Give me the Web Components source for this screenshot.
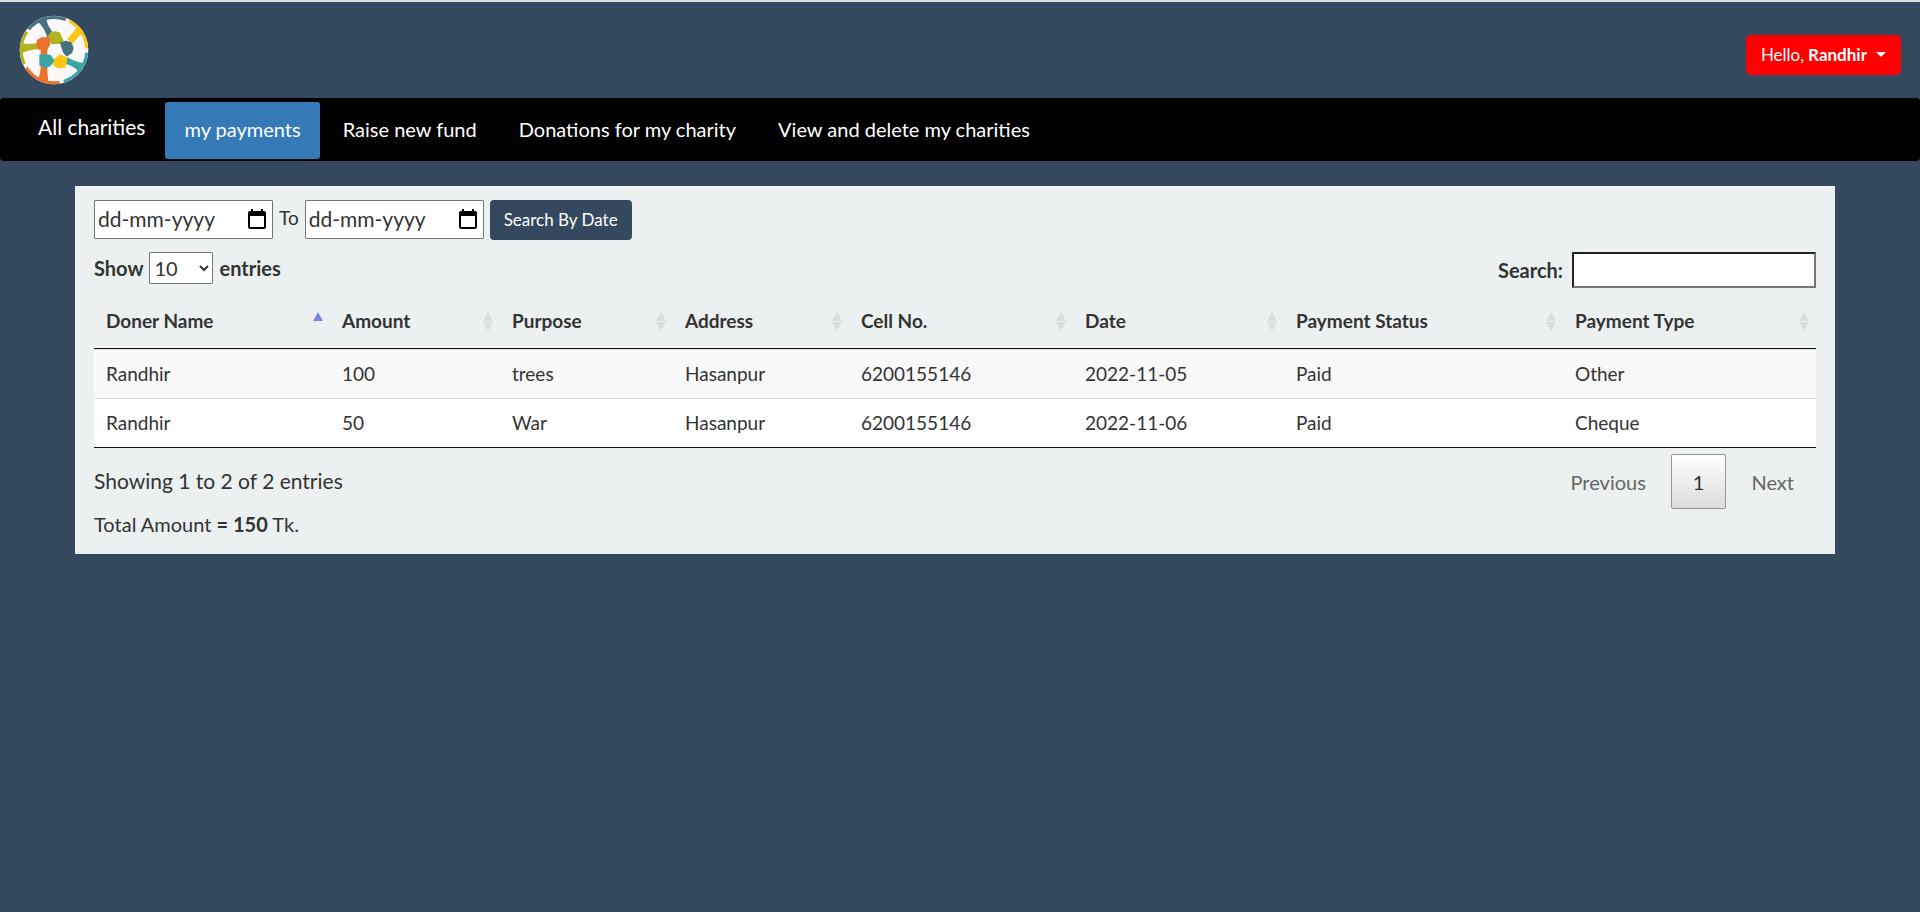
<!DOCTYPE html>
<html lang="en">
<head>
<meta charset="utf-8">
<title>My payments</title>
<style>
  html { background: #34495e; }
  body {
    margin: 0;
    border-top: 2px solid #d5dee1;
    font-family: Lato, "Open Sans", sans-serif;
    font-size: 20px;
    line-height: 28px;
    color: #333;
  }
</style>
</head>
<body>
<site-header></site-header>
<site-nav>
  <nav-link large>All charities</nav-link>
  <nav-link active>my payments</nav-link>
  <nav-link>Raise new fund</nav-link>
  <nav-link>Donations for my charity</nav-link>
  <nav-link>View and delete my charities</nav-link>
</site-nav>
<payments-panel>
  <date-filter slot="filter"></date-filter>
  <payments-table></payments-table>
  <span slot="total">Total Amount <b>= 150</b> Tk.</span>
</payments-panel>

<script>
const define = (name, html, setup) => {
  const template = document.createElement('template');
  template.innerHTML = html;
  customElements.define(name, class extends HTMLElement {
    constructor() {
      super();
      this.attachShadow({ mode: 'open' }).append(template.content.cloneNode(true));
    }
    connectedCallback() { if (setup) setup(this, this.shadowRoot); }
  });
};

define('charity-logo', `
  <style>:host { display: block; } svg { display: block; width: 70px; height: 70px; }</style>
  <svg viewBox="0 0 210 210" role="img" aria-label="Charity logo">
    <circle cx="105" cy="105" r="103" fill="#faf8fb"/>
    <g fill="none" stroke-width="9">
      <path stroke="#46727f" d="M29 43A98 98 0 0 1 140 14"/>
      <path stroke="#ffc50f" d="M150 18A98 98 0 0 1 203 100"/>
      <path stroke="#3aa5a3" d="M203 113A98 98 0 0 1 134 199"/>
      <path stroke="#eb722b" d="M122 202A98 98 0 0 1 22 158"/>
      <path stroke="#b0b41e" d="M16 147A98 98 0 0 1 24 50"/>
    </g>
    <path fill="#46727f" d="M58 22L82 12Q84 30 104 56L86 70Q76 38 58 22Z"/>
    <path fill="#ffc50f" d="M176 31L194 51Q174 66 162 86L144 72Q165 53 176 31Z"/>
    <path fill="#3aa5a3" d="M192 144L183 172Q164 152 138 146L144 127Q170 141 192 144Z"/>
    <path fill="#eb722b" d="M64 82H86Q82 150 88 202L58 196Q66 165 66 140Z"/>
    <path fill="#b0b41e" d="M6 85Q32 90 58 83V103Q32 103 8 115Z"/>
    <g stroke-width="4" stroke-linejoin="round">
      <path fill="#b0b41e" stroke="#b0b41e" d="M88 66L95 54L108 51L121 54L132 78L122 84L98 86Z"/>
      <path fill="#46727f" stroke="#46727f" d="M125 84L141 79L156 84L162 99L158 112L144 122L134 112Z"/>
      <path fill="#ffc50f" stroke="#ffc50f" d="M104 138L122 120L142 128V143L136 156L118 158L103 149Z"/>
      <path fill="#3aa5a3" stroke="#3aa5a3" d="M63 119L94 121L104 137L94 151L80 158L63 150Z"/>
      <path fill="#eb722b" stroke="#eb722b" d="M55 77L67 69L90 68L91 90L84 102L60 102L54 94Z"/>
    </g>
  </svg>`);

define('site-header', `
  <style>
    :host { display: flex; align-items: center; justify-content: space-between;
            height: 96px; padding: 0 19px; }
    button { display: flex; align-items: center; gap: 4px; margin-top: 9px; height: 40px;
             padding: 0 15px; border: 0; border-radius: 5px; background: #f00;
             color: #fff; font: inherit; font-size: 17px; cursor: pointer; }
    svg { width: 10px; height: 5px; margin-left: 5px; }
  </style>
  <charity-logo></charity-logo>
  <button type="button">Hello, <b>Randhir</b>
    <svg viewBox="0 0 10 5" aria-hidden="true"><path fill="#fff" d="M0 0H10L5 5Z"/></svg>
  </button>`);

define('site-nav', `
  <style>
    :host { display: block; }
    nav { display: flex; gap: 4px; padding: 4px 19px 2px; border-radius: 4px; background: #000; }
  </style>
  <nav aria-label="Main"><slot></slot></nav>`);

define('nav-link', `
  <style>
    :host { display: block; }
    a { display: block; padding: 12px 19px 15px; line-height: 30px; color: #fff;
        text-decoration: none; border-radius: 3px; white-space: nowrap; }
    :host([large]) a { font-size: 21px; padding: 10px 16px 15px 19px; }
    :host([active]) a { background: #337ab7; }
  </style>
  <a href="#"><slot></slot></a>`, (host, root) => {
    if (host.hasAttribute('active')) root.querySelector('a').setAttribute('aria-current', 'page');
  });

define('date-field', `
  <style>
    :host { display: flex; align-items: center; box-sizing: border-box; width: 179px;
            height: 39px; padding: 0 6px 2px 3px; border: 1px solid #767676;
            border-radius: 1px; background: #fff; }
    input { flex: 1; min-width: 0; padding: 0; border: 0; outline: 0; background: none;
            font: inherit; font-size: 21px; color: #333; }
    input::placeholder { color: #333; opacity: 1; }
    button { padding: 0; border: 0; background: none; }
    svg { display: block; width: 18px; height: 20px; }
  </style>
  <input type="text" placeholder="dd-mm-yyyy">
  <button type="button" aria-label="Open calendar">
    <svg viewBox="0 0 18 20"><path d="M3 0H5V2H13V0H15V2H16Q18 2 18 4V18Q18 20 16 20H2Q0 20 0 18V4Q0 2 2 2H3ZM2 7V18H16V7Z" fill-rule="evenodd"/></svg>
  </button>`, (host, root) => {
    root.querySelector('input').setAttribute('aria-label', host.getAttribute('label'));
  });

define('date-filter', `
  <style>
    :host { display: flex; gap: 6px; height: 40px; }
    span { font-size: 19px; line-height: 36px; }
    button { height: 40px; padding: 0 14px; border: 0; border-radius: 4px;
             background: #34495e; color: #fff; font: inherit; font-size: 17px; }
  </style>
  <date-field label="From date"></date-field><span>To</span>
  <date-field label="To date"></date-field>
  <button type="button">Search By Date</button>`);

define('payments-panel', `
  <style>
    :host { display: block; margin: 25px 85px 24px 75px; padding: 14px 19px;
            background: #ecf0f1; }
    .tools { display: flex; justify-content: space-between; margin: 12px 0 10px; height: 36px;
             font-weight: bold; }
    label { display: flex; align-items: center; gap: 6px; }
    .length { height: 32px; }
    .search { gap: 9px; }
    select { width: 64px; height: 32px; border: 1px solid #767676; border-radius: 1px;
             background: #fff; font: inherit; font-weight: normal; color: #333; }
    input { box-sizing: border-box; width: 244px; height: 36px; border: 2px inset #767676;
            background: #fff; font: inherit; }
    .foot { display: flex; justify-content: space-between; margin-top: 6px; }
    .info { margin-top: 13px; font-size: 21px; }
    .pager { display: flex; }
    .pager button { height: 55px; padding: 0 21px; border: 1px solid transparent; border-radius: 2px;
                    background: none; color: #666; font: inherit; }
    .pager .current { margin: 0 3px; border-color: #979797; color: #333;
                      background: linear-gradient(#fff, #dcdcdc); }
    .total { padding: 1px 0 2px; }
  </style>
  <slot name="filter"></slot>
  <div class="tools">
    <label class="length">Show <select><option>10</option><option>25</option><option>50</option><option>100</option></select> entries</label>
    <label class="search">Search: <input type="search"></label>
  </div>
  <slot></slot>
  <div class="foot">
    <div class="info" role="status">Showing 1 to 2 of 2 entries</div>
    <div class="pager">
      <button type="button">Previous</button><button type="button" class="current" aria-current="page">1</button><button type="button">Next</button>
    </div>
  </div>
  <div class="total"><slot name="total"></slot></div>`);

define('sort-arrows', `
  <style>
    :host { display: block; }
    svg { display: block; width: 10px; height: 19px; fill: #dadcdd; }
    :host([ascending]) .up { fill: #7b83e0; }
    :host([ascending]) .down { display: none; }
  </style>
  <svg viewBox="0 0 10 19" aria-hidden="true"><path class="up" d="M5 0L10 9H0Z"/><path class="down" d="M5 19L0 10H10Z"/></svg>`);

define('payments-table', `
  <style>
    :host { display: block; }
    table { width: 100%; table-layout: fixed; border-spacing: 0; border-bottom: 1px solid #111;
            font-size: 19px; text-align: left; }
    th, td { padding: 8px 7px 8px 12px; line-height: 32px; }
    th { padding: 7px 7px 11px 12px; border-bottom: 1px solid #111; }
    th div { display: flex; align-items: center; justify-content: space-between; white-space: nowrap; }
    td { border-top: 1px solid #ddd; background: #fff; }
    tr:nth-child(odd) td { background: #f9f9f9; }
  </style>
  <table><colgroup></colgroup><thead><tr></tr></thead><tbody></tbody></table>`, (host, root) => {
    const columns = [['Doner Name', 236], ['Amount', 170], ['Purpose', 173], ['Address', 176],
      ['Cell No.', 224], ['Date', 211], ['Payment Status', 279], ['Payment Type', 253]];
    const rows = [
      ['Randhir', '100', 'trees', 'Hasanpur', '6200155146', '2022-11-05', 'Paid', 'Other'],
      ['Randhir', '50', 'War', 'Hasanpur', '6200155146', '2022-11-06', 'Paid', 'Cheque'],
    ];
    const sum = columns.reduce((n, c) => n + c[1], 0);
    root.querySelector('colgroup').innerHTML =
      columns.map(c => `<col style="width:${c[1] / sum * 100}%">`).join('');
    root.querySelector('thead tr').innerHTML = columns.map((c, i) =>
      `<th scope="col"${i ? '' : ' aria-sort="ascending"'}><div>${c[0]}<sort-arrows${i ? '' : ' ascending'}></sort-arrows></div></th>`).join('');
    root.querySelector('tbody').innerHTML =
      rows.map(r => `<tr>${r.map(v => `<td>${v}</td>`).join('')}</tr>`).join('');
  });
</script>
</body>
</html>
